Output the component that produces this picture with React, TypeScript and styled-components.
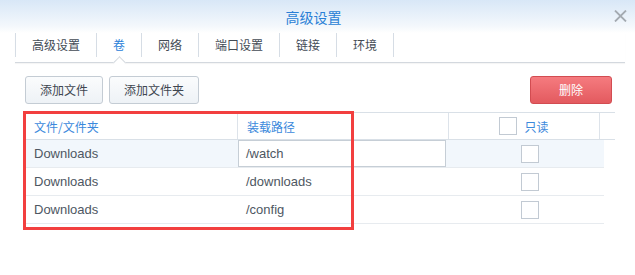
import React from "react";
import styled, { createGlobalStyle } from "styled-components";

const GlobalStyle = createGlobalStyle`
  body {
    margin: 0;
    background: #fff;
    font-family: "Liberation Sans", "Noto Sans CJK SC", sans-serif;
  }
`;

const Window = styled.div`
  width: 635px;
  height: 275px;
  background: #fff;
  overflow: hidden;
`;

const TitleBar = styled.div`
  display: grid;
  grid-template-columns: 1fr auto 1fr;
  align-items: center;
  height: 33px;
  padding: 0 8px 0 0;
  background: linear-gradient(#d8e7f7, #f4f8fc 80%, #ffffff);
`;

const Title = styled.div`
  font-family: "Noto Sans CJK SC", sans-serif;
  font-size: 14px;
  line-height: 16px;
  color: #2a7fd6;
  padding-top: 1px;
`;

const Close = styled.div`
  justify-self: end;
  display: flex;
  margin-top: -2px;
`;

const TabBar = styled.div`
  position: relative;
  display: flex;
  margin: 0 10px 0 15px;
  padding-bottom: 5px;
  border-bottom: 1px solid #d3d8de;
  box-shadow: 0 1px 1px rgba(0, 0, 0, 0.04);
`;

const Tab = styled.div<{ $active?: boolean; $last?: boolean }>`
  position: relative;
  height: 24px;
  line-height: 24px;
  padding: 0 16px;
  font-family: "Noto Sans CJK SC", sans-serif;
  font-size: 12px;
  color: ${(p) => (p.$active ? "#2a80d8" : "#434b55")};
  border-left: 1px solid #d6dde5;
  border-right: ${(p) => (p.$last ? "1px solid #d6dde5" : "none")};

  ${(p) =>
    p.$active &&
    `
    &::after {
      content: "";
      position: absolute;
      left: 50%;
      bottom: -10px;
      width: 8px;
      height: 8px;
      margin-left: -4px;
      background: #fff;
      border-top: 1px solid #d3d8de;
      border-left: 1px solid #d3d8de;
      transform: rotate(45deg);
    }
  `}
`;

const Toolbar = styled.div`
  display: flex;
  align-items: center;
  gap: 6px;
  padding: 13px 23px 0 25px;
`;

const Spacer = styled.div`
  flex: 1;
`;

const Button = styled.button<{ $danger?: boolean }>`
  height: 28px;
  padding: 0 14px;
  min-width: ${(p) => (p.$danger ? "82px" : "0")};
  border-radius: 3px;
  font-family: "Noto Sans CJK SC", sans-serif;
  font-size: 12px;
  line-height: 16px;
  color: ${(p) => (p.$danger ? "#ffffff" : "#3e4650")};
  border: 1px solid ${(p) => (p.$danger ? "#d24c51" : "#c4ccd4")};
  background: ${(p) =>
    p.$danger
      ? "linear-gradient(#f57b7f, #e35a5f)"
      : "linear-gradient(#fbfcfd, #eef2f6)"};
`;

const TableWrap = styled.div`
  position: relative;
  margin: 8px 0 0 25px;
`;

const HeadRow = styled.div`
  display: grid;
  grid-template-columns: 213px 211px 151px 15px;
  width: 590px;
  height: 26px;
  border-top: 1px solid #d9e0e7;
  border-bottom: 1px solid #d9e0e7;
`;

const HeadCell = styled.div<{ $center?: boolean; $noBorder?: boolean }>`
  display: flex;
  align-items: center;
  justify-content: ${(p) => (p.$center ? "center" : "flex-start")};
  gap: 7px;
  padding-left: ${(p) => (p.$center ? "0" : "9px")};
  border-right: ${(p) => (p.$noBorder ? "none" : "1px solid #dde3ea")};
  font-family: "Noto Sans CJK SC", sans-serif;
  font-size: 12px;
  color: #3b89dc;
`;

const Row = styled.div<{ $selected?: boolean }>`
  display: grid;
  grid-template-columns: 213px 211px 155px;
  width: 579px;
  height: 27px;
  border-bottom: 1px solid #e7ebef;
  background: ${(p) => (p.$selected ? "#f2f7fc" : "#fff")};
`;

const Cell = styled.div<{ $pad?: number }>`
  display: flex;
  align-items: center;
  padding-left: ${(p) => p.$pad ?? 9}px;
  font-size: 13px;
  color: #4e5762;
  white-space: nowrap;
`;

const PathInput = styled.div`
  display: flex;
  align-items: center;
  box-sizing: border-box;
  width: 208px;
  height: 27px;
  padding-left: 7px;
  border: 1px solid #c6ced6;
  background: #fff;
  font-size: 13px;
  color: #4e5762;
`;

const Check = styled.span`
  display: inline-block;
  box-sizing: border-box;
  width: 18px;
  height: 18px;
  border: 1px solid #c2cad3;
  background: #fff;
`;

const Highlight = styled.div`
  position: absolute;
  left: -2px;
  top: -1px;
  width: 331px;
  height: 119px;
  box-sizing: border-box;
  border: 3px solid #f23f3f;
  pointer-events: none;
`;

const tabs = ["高级设置", "卷", "网络", "端口设置", "链接", "环境"];

const rows = [
  { folder: "Downloads", path: "/watch" },
  { folder: "Downloads", path: "/downloads" },
  { folder: "Downloads", path: "/config" },
];

const App = () => (
  <Window>
    <GlobalStyle />
    <TitleBar>
      <div />
      <Title>高级设置</Title>
      <Close>
        <svg width="13" height="12" viewBox="0 0 13 12">
          <path d="M1 0.5 L12 11.5 M12 0.5 L1 11.5" stroke="#a4aab1" strokeWidth="1.8" />
        </svg>
      </Close>
    </TitleBar>
    <TabBar>
      {tabs.map((t, i) => (
        <Tab key={t} $active={i === 1} $last={i === tabs.length - 1}>
          {t}
        </Tab>
      ))}
    </TabBar>
    <Toolbar>
      <Button>添加文件</Button>
      <Button>添加文件夹</Button>
      <Spacer />
      <Button $danger>删除</Button>
    </Toolbar>
    <TableWrap>
      <HeadRow>
        <HeadCell>文件/文件夹</HeadCell>
        <HeadCell>装载路径</HeadCell>
        <HeadCell $center>
          <Check />
          只读
        </HeadCell>
        <HeadCell $noBorder />
      </HeadRow>
      {rows.map((r, i) => (
        <Row key={r.path} $selected={i === 0}>
          <Cell>{r.folder}</Cell>
          {i === 0 ? (
            <Cell $pad={0}>
              <PathInput>{r.path}</PathInput>
            </Cell>
          ) : (
            <Cell $pad={8}>{r.path}</Cell>
          )}
          <Cell $pad={72}>
            <Check />
          </Cell>
        </Row>
      ))}
      <Highlight />
    </TableWrap>
  </Window>
);

export default App;
